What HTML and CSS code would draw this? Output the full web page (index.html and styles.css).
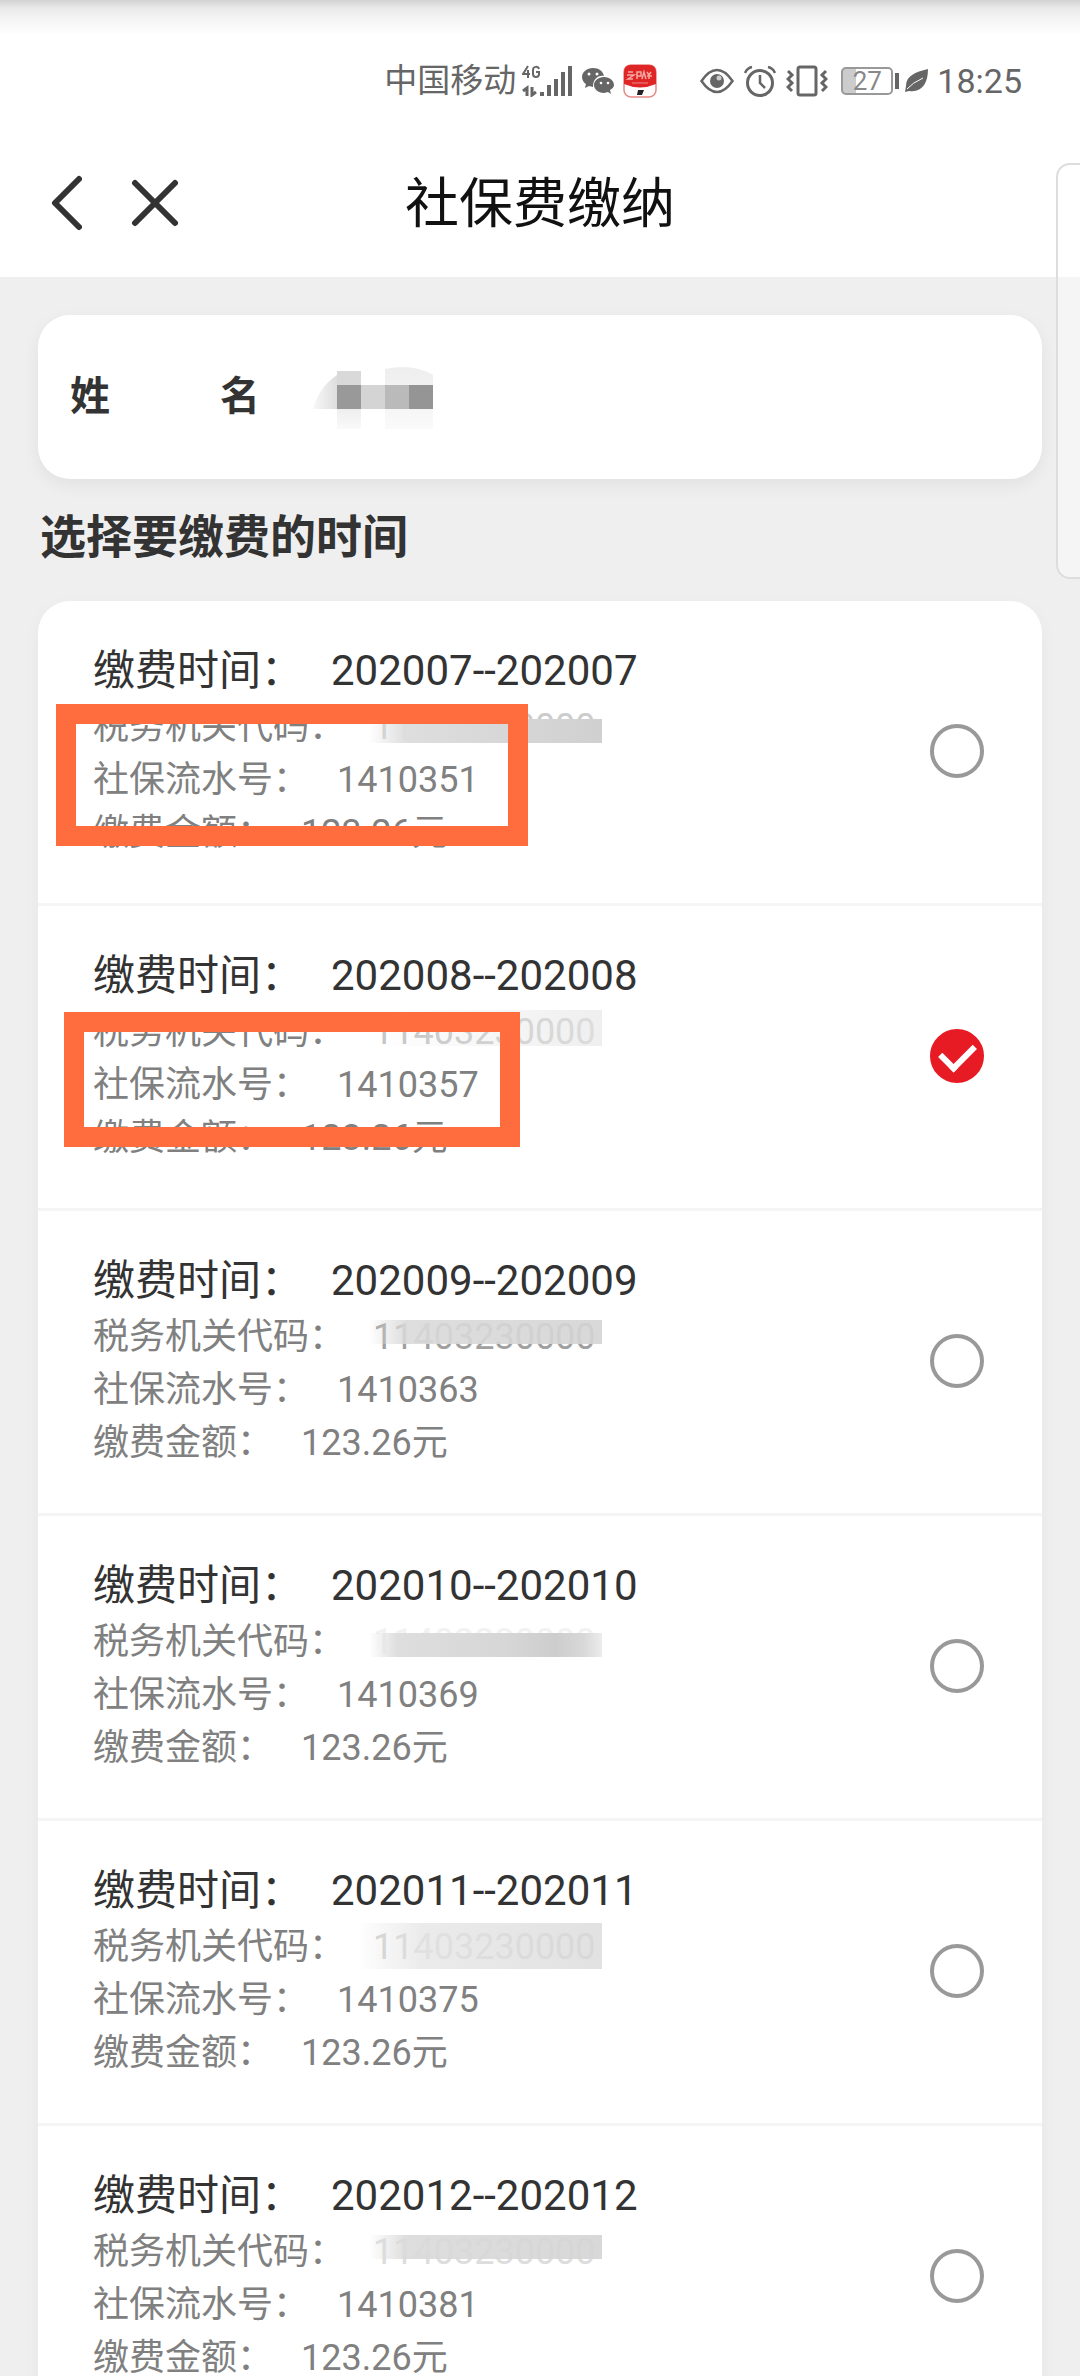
FILE: index.html
```html
<!DOCTYPE html>
<html lang="zh-CN">
<head>
    <meta charset="UTF-8">
    <meta name="viewport" content="width=device-width, initial-scale=1.0">
    <title>社保费缴纳</title>
    <link rel="stylesheet" href="styles.css">
</head>
<body>
    <div class="app">
        <div class="status-bar">
            <span class="carrier">中国移动</span>
            <svg class="signal" width="50" height="32" viewBox="0 0 50 32">
                <g fill="none" stroke="#666" stroke-width="2">
                    <path d="M6 1L1 9H8M6 5V13"/>
                    <path d="M17 4C16 1 11 1 11 5V9C11 13 17 13 17 9V7H14"/>
                    <path stroke-width="3" d="M5 31V23L1 26M10 22V30L14 27"/>
                </g>
                <g fill="#666">
                    <rect x="18" y="27" width="4" height="4"/>
                    <rect x="25" y="20" width="4" height="11"/>
                    <rect x="32" y="14" width="4" height="17"/>
                    <rect x="39" y="7" width="4" height="24"/>
                    <rect x="46" y="1" width="4" height="30"/>
                </g>
            </svg>
            <svg class="wechat" width="32" height="28" viewBox="0 0 32 28">
                <path fill="#666" d="M11 1C5 1 0 5 0 10c0 3 2 6 4 7l-1 4 4-2 4 1C11 12 16 8 22 9 21 4 17 1 11 1z"/>
                <path fill="#666" d="M22 10c-6 0-10 4-10 8s4 8 10 8l4-1 3 2-1-4c2-1 4-3 4-5 0-4-4-8-10-8z"/>
                <g fill="#fff">
                    <circle cx="7" cy="7" r="1.5"/>
                    <circle cx="15" cy="7" r="1.5"/>
                    <circle cx="19" cy="16" r="1.3"/>
                    <circle cx="26" cy="16" r="1.3"/>
                </g>
            </svg>
            <svg class="pay-app" width="34" height="34" viewBox="0 0 34 34">
                <rect x="1" y="1" width="32" height="32" rx="7" fill="#fff" stroke="#e98b87" stroke-width="1.5"/>
                <path fill="#df2626" d="M1 8Q1 1 8 1H26Q33 1 33 8V20Q17 27 1 20z"/>
                <path fill="none" stroke="#f7a8a2" stroke-width="1.5" d="M5 8H10M4 11H11L5 15H10M14 15V8H18V12H14M19 15L21 8 23 15M24 8L26 11 28 8M26 11V15M24 12H29"/>
                <path stroke="#f28680" d="M9 19H25"/>
                <path fill="#222" d="M15 26H21L19 31H14z"/>
            </svg>
            <svg class="eye" width="34" height="26" viewBox="0 0 34 26">
                <path fill="none" stroke="#666" stroke-width="2.5" d="M1.5 13Q9 2 17 2T32.500 13Q25 24 17 24T1.500 13z"/>
                <circle cx="17" cy="13" r="7" fill="#666"/>
                <circle cx="19" cy="10" r="2.500" fill="#ccc"/>
            </svg>
            <svg class="alarm" width="32" height="32" viewBox="0 0 32 32">
                <g fill="none" stroke="#666" stroke-width="3">
                    <circle cx="16" cy="18" r="12.500"/>
                    <path stroke-width="2.500" d="M16 10V18L21 23M1 8Q3 3 8 2M24 2Q29 3 31 8"/>
                </g>
            </svg>
            <svg class="vibrate" width="42" height="32" viewBox="0 0 42 32">
                <g fill="none" stroke="#666" stroke-width="3">
                    <rect x="12" y="2" width="18" height="28" rx="2"/>
                    <path d="M2 6L6 10 2 14 6 18 2 22 6 26M40 6L36 10 40 14 36 18 40 22 36 26"/>
                </g>
            </svg>
            <span class="battery">27</span>
            <svg class="leaf" width="24" height="24" viewBox="0 0 24 24">
                <path fill="#666" d="M23 0C10 3 1 7 1 17L0 23 4 22C17 24 23 14 23 0z"/>
                <path fill="none" stroke="#fff" d="M2 20Q7 14 18 9"/>
            </svg>
            <span class="clock">18:25</span>
        </div>

        <header class="nav-bar">
            <div class="nav-buttons">
                <button type="button" aria-label="返回">
                    <svg width="32" height="56" viewBox="0 0 32 56"><path d="M29 4L5 28 29 52"/></svg>
                </button>
                <button type="button" aria-label="关闭">
                    <svg width="48" height="56" viewBox="0 0 48 56"><path d="M5 8L45 48M45 8L5 48"/></svg>
                </button>
            </div>
            <h1>社保费缴纳</h1>
        </header>

        <main>
            <section class="name-card">
                <span class="name-label"><span>姓</span><span>名</span></span>
                <svg class="name-mask" width="130" height="72" viewBox="0 0 130 72">
                    <defs>
                        <linearGradient id="smudge">
                            <stop offset="0" stop-color="#ddd" stop-opacity="0.2"/>
                            <stop offset="1" stop-color="#ddd"/>
                        </linearGradient>
                        <linearGradient id="smudge-down" x2="0" y2="1">
                            <stop offset="0" stop-color="#eee"/>
                            <stop offset="1" stop-color="#eee" stop-opacity="0.3"/>
                        </linearGradient>
                    </defs>
                    <path fill="url(#smudge)" d="M0 48Q6 26 24 14V48z"/>
                    <rect x="24" y="10" width="24" height="14" fill="#d9d9d9"/>
                    <path fill="url(#smudge-down)" d="M72 8Q100 2 120 14V68H72z"/>
                    <rect x="24" y="48" width="24" height="20" fill="url(#smudge-down)"/>
                    <rect x="24" y="24" width="24" height="24" fill="#999"/>
                    <rect x="48" y="24" width="24" height="24" fill="#d4d4d4"/>
                    <rect x="72" y="24" width="24" height="24" fill="#bababa"/>
                    <rect x="96" y="24" width="24" height="24" fill="#959595"/>
                </svg>
            </section>

            <h2>选择要缴费的时间</h2>

            <ul class="bill-list">
                <li>
                    <label class="bill">
                        <span class="bill-info">
                            <span class="period"><span>缴费时间：</span><span>202007--202007</span></span>
                            <span class="detail"><span>税务机关代码：</span><span class="code mask-low">11403230000</span></span>
                            <span class="detail"><span>社保流水号：</span><span>1410351</span></span>
                            <span class="detail"><span>缴费金额：</span><span>123.26元</span></span>
                        </span>
                        <input type="radio" name="bill">
                    </label>
                    <div class="marker marker-first"></div>
                </li>
                <li>
                    <label class="bill">
                        <span class="bill-info">
                            <span class="period"><span>缴费时间：</span><span>202008--202008</span></span>
                            <span class="detail"><span>税务机关代码：</span><span class="code mask-light">11403230000</span></span>
                            <span class="detail"><span>社保流水号：</span><span>1410357</span></span>
                            <span class="detail"><span>缴费金额：</span><span>123.26元</span></span>
                        </span>
                        <input type="radio" name="bill" checked>
                    </label>
                    <div class="marker marker-second"></div>
                </li>
                <li>
                    <label class="bill">
                        <span class="bill-info">
                            <span class="period"><span>缴费时间：</span><span>202009--202009</span></span>
                            <span class="detail"><span>税务机关代码：</span><span class="code">11403230000</span></span>
                            <span class="detail"><span>社保流水号：</span><span>1410363</span></span>
                            <span class="detail"><span>缴费金额：</span><span>123.26元</span></span>
                        </span>
                        <input type="radio" name="bill">
                    </label>
                </li>
                <li>
                    <label class="bill">
                        <span class="bill-info">
                            <span class="period"><span>缴费时间：</span><span>202010--202010</span></span>
                            <span class="detail"><span>税务机关代码：</span><span class="code mask-middle">11403230000</span></span>
                            <span class="detail"><span>社保流水号：</span><span>1410369</span></span>
                            <span class="detail"><span>缴费金额：</span><span>123.26元</span></span>
                        </span>
                        <input type="radio" name="bill">
                    </label>
                </li>
                <li>
                    <label class="bill">
                        <span class="bill-info">
                            <span class="period"><span>缴费时间：</span><span>202011--202011</span></span>
                            <span class="detail"><span>税务机关代码：</span><span class="code mask-full">11403230000</span></span>
                            <span class="detail"><span>社保流水号：</span><span>1410375</span></span>
                            <span class="detail"><span>缴费金额：</span><span>123.26元</span></span>
                        </span>
                        <input type="radio" name="bill">
                    </label>
                </li>
                <li>
                    <label class="bill">
                        <span class="bill-info">
                            <span class="period"><span>缴费时间：</span><span>202012--202012</span></span>
                            <span class="detail"><span>税务机关代码：</span><span class="code mask-faded">11403230000</span></span>
                            <span class="detail"><span>社保流水号：</span><span>1410381</span></span>
                            <span class="detail"><span>缴费金额：</span><span>123.26元</span></span>
                        </span>
                        <input type="radio" name="bill">
                    </label>
                </li>
            </ul>
        </main>

        <div class="side-handle"></div>
    </div>
</body>
</html>
```
FILE: styles.css
```css
* {
    box-sizing: border-box;
}
body {
    margin: 0;
    background-color: #efefef;
    font-family: Roboto, "Noto Sans CJK SC", sans-serif;
    color: #333;
}
.app {
    position: relative;
    height: 100vh;
    overflow: hidden;
}
/* Status bar */
.status-bar {
    display: flex;
    justify-content: flex-end;
    align-items: center;
    height: 124px;
    padding: 38px 58px 0 0;
    background: linear-gradient(#d2d2d2, #e9e9e9 8px, #f4f4f4 18px, #fff 36px);
    color: #666;
    line-height: 40px;
}
.carrier {
    font-size: 33px;
    margin-right: 6px;
}
.wechat {
    margin-left: 10px;
}
.pay-app {
    margin-left: 9px;
}
.eye {
    margin-left: 43px;
}
.alarm {
    margin-left: 10px;
}
.vibrate {
    margin-left: 10px;
}
.battery {
    position: relative;
    width: 52px;
    height: 28px;
    margin: 0 12px 0 13px;
    border: 2px solid #999;
    border-radius: 5px;
    background: linear-gradient(to right, #ccc 27%, #fff 27%);
    color: #888;
    font-size: 26px;
    line-height: 24px;
    text-align: center;
}
.battery::after {
    content: '';
    position: absolute;
    top: 4px;
    right: -8px;
    width: 4px;
    height: 16px;
    background-color: #666;
}
.clock {
    margin-left: 8px;
    font-size: 34px;
}
/* Title bar */
.nav-bar {
    display: grid;
    grid-template-columns: 1fr auto 1fr;
    align-items: center;
    height: 153px;
    padding: 4px 50px 0;
    background-color: #fff;
}
.nav-buttons {
    display: flex;
    gap: 48px;
}
.nav-buttons button {
    display: flex;
    padding: 0;
    border: none;
    background: none;
}
.nav-buttons path {
    fill: none;
    stroke: #333;
    stroke-width: 6;
    stroke-linecap: round;
    stroke-linejoin: round;
}
h1 {
    margin: 0;
    padding-top: 4px;
    color: #111;
    font-size: 54px;
    font-weight: 400;
    line-height: 80px;
}
main {
    padding: 38px;
}
.name-card {
    display: flex;
    align-items: center;
    height: 164px;
    padding: 0 32px;
    border-radius: 32px;
    background-color: #fff;
    box-shadow: 0 6px 18px rgba(0, 0, 0, 0.06);
}
.name-label {
    display: flex;
    justify-content: space-between;
    width: 190px;
    font-size: 40px;
    font-weight: 700;
    line-height: 60px;
}
.name-mask {
    margin-left: 53px;
}
h2 {
    margin: 24px 0 30px;
    padding-left: 2px;
    font-size: 46px;
    font-weight: 700;
    line-height: 68px;
}
/* Bills */
.bill-list {
    margin: 0;
    padding: 0;
    border-radius: 32px;
    background-color: #fff;
    list-style: none;
    box-shadow: 0 6px 18px rgba(0, 0, 0, 0.04);
}
.bill-list li {
    position: relative;
    border-bottom: 3px solid #f5f5f5;
}
.bill {
    display: flex;
    justify-content: space-between;
    align-items: center;
    padding: 40px 58px 43px 55px;
}
.period,
.detail {
    display: flex;
    gap: 28px;
}
.period {
    font-size: 42px;
    line-height: 60px;
}
.detail {
    color: #808080;
    font-size: 36px;
    line-height: 53px;
}
.bill input {
    display: flex;
    justify-content: center;
    align-items: center;
    appearance: none;
    width: 54px;
    height: 54px;
    margin: 0;
    border: 4px solid #999;
    border-radius: 50%;
}
.bill input:checked {
    border-color: #e71b24;
    background-color: #e71b24;
}
.bill input:checked::before {
    content: '';
    width: 27px;
    height: 16px;
    margin-bottom: 6px;
    border: solid #fff;
    border-width: 0 0 6px 6px;
    transform: rotate(-45deg);
}
/* Smudge over the tax office code */
.code {
    position: relative;
    color: #a0a0a0;
}
.code::after {
    content: '';
    position: absolute;
    top: 9px;
    left: -4px;
    right: -6px;
    height: 24px;
    background: linear-gradient(to right, rgba(224, 224, 224, 0), rgba(218, 218, 218, 0.9) 16%, rgba(212, 212, 212, 0.9));
}
.mask-low {
    color: #ccc;
}
.mask-low::after {
    top: 18px;
    background: linear-gradient(to right, rgba(224, 224, 224, 0), #dedede 16%, #d0d0d0);
}
.mask-light {
    color: #c4c4c4;
}
.mask-light::after {
    top: 4px;
    height: 36px;
    background: linear-gradient(to right, rgba(240, 240, 240, 0), rgba(232, 232, 232, 0.7));
}
.mask-middle {
    color: #f2f2f2;
}
.mask-middle::after {
    top: 17px;
    background: linear-gradient(to right, rgba(224, 224, 224, 0), #dedede 12%, #d6d6d6 60%, #cdcdcd 80%, #d8d8d8 92%, #ececec);
}
.mask-full {
    color: #ccc;
}
.mask-full::after {
    top: 2px;
    left: -12px;
    height: 46px;
    background: linear-gradient(to right, rgba(240, 240, 240, 0.1), rgba(230, 230, 230, 0.8) 25%, rgba(218, 218, 218, 0.8));
}
.mask-faded {
    color: #ddd;
}
/* Orange frames round the serial numbers */
.marker {
    position: absolute;
    border: 20px solid #ff6c3e;
    pointer-events: none;
}
.marker-first {
    top: 103px;
    left: 18px;
    width: 472px;
    height: 142px;
}
.marker-second {
    top: 106px;
    left: 26px;
    width: 456px;
    height: 135px;
}
.side-handle {
    position: absolute;
    top: 163px;
    right: -20px;
    width: 44px;
    height: 416px;
    border: 2px solid #ddd;
    border-radius: 14px;
    background-color: rgba(255, 255, 255, 0.4);
}
```
